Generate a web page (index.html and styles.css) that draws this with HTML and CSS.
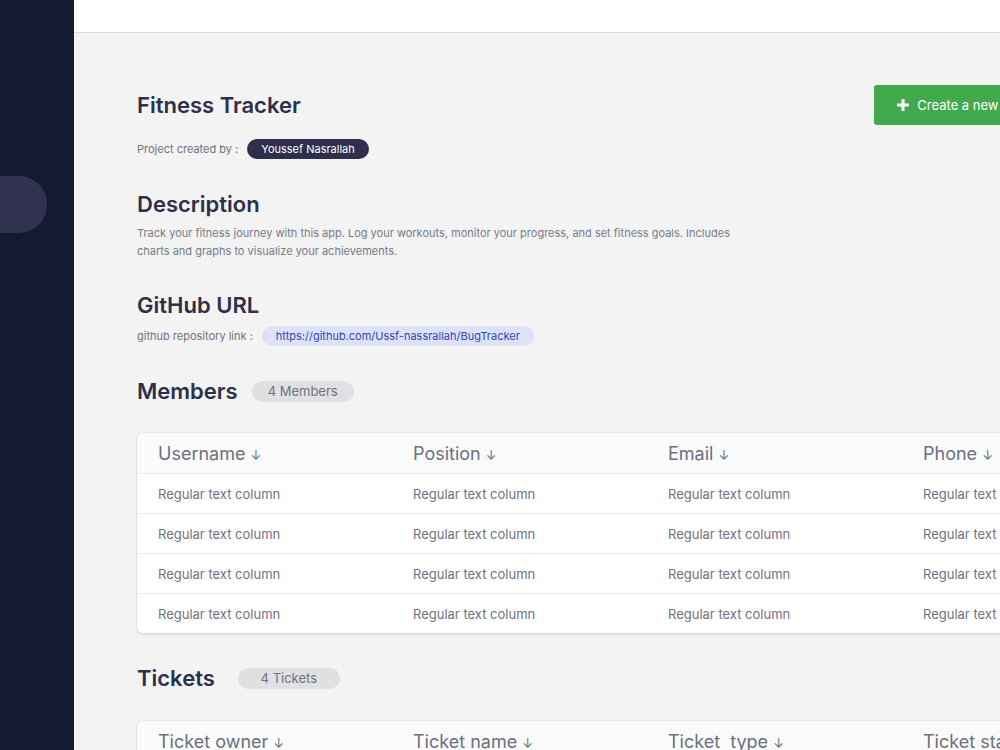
FILE: index.html
```html
<!DOCTYPE html>
<html>
<head>
    <meta charset="UTF-8">
    <meta name="viewport" content="width=device-width, initial-scale=1.0">
    <title>Fitness Tracker</title>
    <link rel="stylesheet" href="styles.css">
</head>
<body>
    <div class="app">
        <aside class="sidebar">
            <div class="nav-active"></div>
        </aside>

        <div class="main">
            <div class="topbar"></div>

            <div class="content">
                <div class="page-head">
                    <h1 class="title">Fitness Tracker</h1>
                    <a href="#" class="button-green">
                        <svg width="14" height="14" viewBox="0 0 14 14"><path d="M7 1v12M1 7h12" stroke="#fff" stroke-width="3"/></svg>
                        Create a new project
                    </a>
                </div>
                <div class="meta-row">
                    <span class="meta-label">Project created by :</span>
                    <span class="pill-dark">Youssef Nasrallah</span>
                </div>

                <h2 class="section-title">Description</h2>
                <p class="description">Track your fitness journey with this app. Log your workouts, monitor your progress, and set fitness goals. Includes charts and graphs to visualize your achievements.</p>

                <h2 class="section-title">GitHub URL</h2>
                <div class="meta-row tight">
                    <span class="meta-label">github repository link :</span>
                    <a href="#" class="pill-link">https://github.com/Ussf-nassrallah/BugTracker</a>
                </div>

                <div class="section-head">
                    <h2 class="section-title">Members</h2>
                    <span class="count">4 Members</span>
                </div>
                <div class="table">
                    <div class="row head">
                        <div class="cell">Username <span class="arrow">↓</span></div>
                        <div class="cell">Position <span class="arrow">↓</span></div>
                        <div class="cell">Email <span class="arrow">↓</span></div>
                        <div class="cell">Phone <span class="arrow">↓</span></div>
                    </div>
                    <div class="row">
                        <div class="cell">Regular text column</div>
                        <div class="cell">Regular text column</div>
                        <div class="cell">Regular text column</div>
                        <div class="cell">Regular text column</div>
                    </div>
                    <div class="row">
                        <div class="cell">Regular text column</div>
                        <div class="cell">Regular text column</div>
                        <div class="cell">Regular text column</div>
                        <div class="cell">Regular text column</div>
                    </div>
                    <div class="row">
                        <div class="cell">Regular text column</div>
                        <div class="cell">Regular text column</div>
                        <div class="cell">Regular text column</div>
                        <div class="cell">Regular text column</div>
                    </div>
                    <div class="row">
                        <div class="cell">Regular text column</div>
                        <div class="cell">Regular text column</div>
                        <div class="cell">Regular text column</div>
                        <div class="cell">Regular text column</div>
                    </div>
                </div>

                <div class="section-head wide">
                    <h2 class="section-title">Tickets</h2>
                    <span class="count">4 Tickets</span>
                </div>
                <div class="table tickets">
                    <div class="row head">
                        <div class="cell">Ticket owner <span class="arrow">↓</span></div>
                        <div class="cell">Ticket name <span class="arrow">↓</span></div>
                        <div class="cell">Ticket&nbsp; type <span class="arrow">↓</span></div>
                        <div class="cell">Ticket status <span class="arrow">↓</span></div>
                    </div>
                    <div class="row">
                        <div class="cell">Regular text column</div>
                        <div class="cell">Regular text column</div>
                        <div class="cell">Regular text column</div>
                        <div class="cell">Regular text column</div>
                    </div>
                </div>
            </div>
        </div>
    </div>
</body>
</html>
```

FILE: styles.css
```css
:root {
    --navy: #151a33;
    --ink: #2e3049;
    --muted: #6e7282;
    --green: #43a94d;
}
body {
    margin: 0;
    font-family: 'Inter', 'Noto Sans', sans-serif;
    background: #f3f3f3;
    color: var(--ink);
    overflow: hidden;
}
.app {
    display: flex;
    height: 750px;
}
.sidebar {
    width: 74px;
    flex-shrink: 0;
    background: var(--navy);
    padding-top: 176px;
    box-sizing: border-box;
}
.nav-active {
    width: 47px;
    height: 57px;
    background: #31324f;
    border-radius: 0 28px 28px 0;
}
.main {
    flex: 1;
    min-width: 0;
    overflow: hidden;
}
.topbar {
    height: 32px;
    background: #fff;
    border-bottom: 1px solid #dcdcdf;
}
.content {
    padding: 52px 0 0 63px;
    width: 1020px;
}
.page-head {
    width: 930px;
    height: 40px;
    display: flex;
    align-items: center;
    justify-content: space-between;
}
.title {
    margin: 0;
    font-size: 22px;
    line-height: 26px;
    font-weight: 600;
}
.button-green {
    display: flex;
    align-items: center;
    gap: 7px;
    height: 40px;
    padding: 0 22px;
    box-sizing: border-box;
    background: var(--green);
    color: #fff;
    font-size: 13px;
    text-decoration: none;
    border-radius: 3px;
}
.meta-row {
    display: flex;
    align-items: center;
    gap: 9px;
    margin-top: 14px;
}
.meta-row.tight {
    margin-top: 8px;
}
.meta-label {
    font-size: 11px;
    color: var(--muted);
}
.pill-dark {
    background: #2f2f4b;
    color: #fff;
    font-size: 11px;
    line-height: 20px;
    padding: 0 14px;
    border-radius: 10px;
}
.pill-link {
    background: #dde3f7;
    color: #3444b8;
    font-size: 11px;
    line-height: 20px;
    padding: 0 14px;
    border-radius: 10px;
    text-decoration: none;
}
.section-title {
    margin: 32px 0 0 0;
    font-size: 22px;
    line-height: 26px;
    font-weight: 600;
}
.description {
    margin: 7px 0 0 0;
    width: 600px;
    font-size: 11px;
    line-height: 18px;
    color: #767a89;
}
.section-head {
    display: flex;
    align-items: center;
    gap: 14px;
    margin-top: 32px;
}
.section-head.wide {
    gap: 23px;
}
.section-head .section-title {
    margin: 0;
}
.count {
    width: 102px;
    text-align: center;
    background: #e0e0e3;
    color: var(--muted);
    font-size: 13px;
    line-height: 21px;
    border-radius: 11px;
}
.table {
    margin-top: 29px;
    width: 1020px;
    background: #fff;
    border-radius: 5px;
    box-shadow: 0 1px 3px rgba(0, 0, 0, 0.12), 0 0 0 1px rgba(0, 0, 0, 0.03);
    overflow: hidden;
}
.table.tickets {
    margin-top: 30px;
}
.row {
    display: grid;
    grid-template-columns: repeat(4, 255px);
    height: 40px;
    box-sizing: border-box;
    align-items: center;
    border-top: 1px solid #ececee;
}
.row:first-child {
    border-top: none;
}
.row.head {
    background: #fafafb;
}
.cell {
    padding-left: 21px;
    font-size: 13px;
    color: var(--muted);
    white-space: nowrap;
}
.head .cell {
    font-size: 18px;
    color: #6b7082;
}
.arrow {
    font-size: 13px;
}
```
